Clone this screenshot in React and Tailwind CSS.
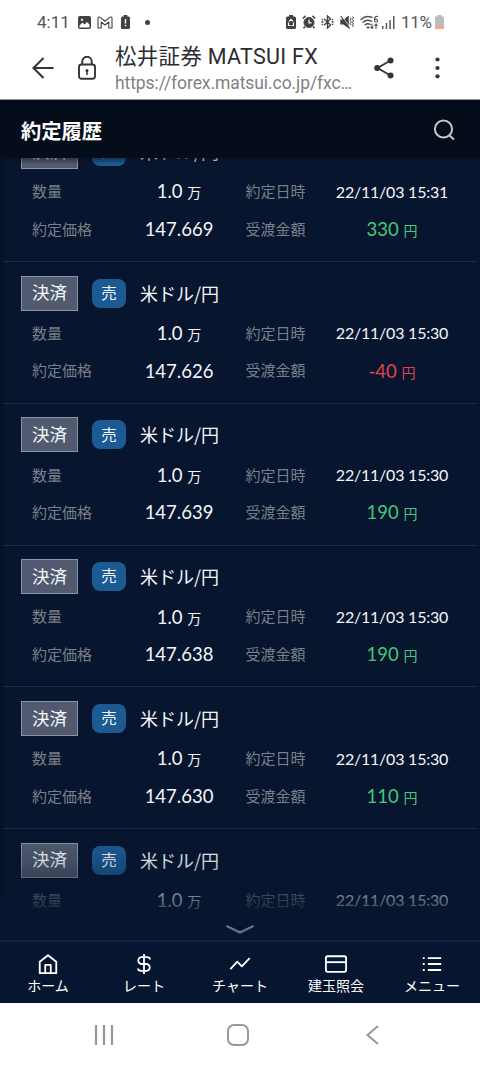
const trades = [
  { price: "147.669", time: "22/11/03 15:31", amount: "330", gain: true },
  { price: "147.626", time: "22/11/03 15:30", amount: "-40", gain: false },
  { price: "147.639", time: "22/11/03 15:30", amount: "190", gain: true },
  { price: "147.638", time: "22/11/03 15:30", amount: "190", gain: true },
  { price: "147.630", time: "22/11/03 15:30", amount: "110", gain: true },
  { price: "", time: "22/11/03 15:30", amount: "", gain: true },
];

function StatusBar() {
  return (
    <div className="flex h-[36px] items-end justify-between pr-[36px] pb-[4px] pl-[37px] font-['Roboto',sans-serif] text-[17px] leading-[20px] text-[#55565a]">
      <div className="flex items-center">
        <span className="w-[34px] whitespace-nowrap">4:11</span>
        <svg className="ml-[7px] h-[13px] w-[13px]" viewBox="0 0 13 13">
          <rect width="13" height="13" rx="2" fill="#404145" />
          <path d="M1.5 9.5 4.5 6.5 6.5 8.5 9 6 11.5 8.5V11.5H1.5Z" fill="#fff" />
          <circle cx="4" cy="3.8" r="1.1" fill="#fff" />
        </svg>
        <svg className="ml-[6px] h-[13px] w-[16px]" viewBox="0 0 16 13" fill="none" stroke="#404145" strokeWidth="1.1" strokeLinejoin="round">
          <path d="M1 12V2.2C1 .9 2.4.6 3.3 1.4L8 5.2 12.7 1.4C13.6.6 15 .9 15 2.2V12H11.8V6L8 9 4.2 6V12Z" />
        </svg>
        <svg className="ml-[8px] h-[14px] w-[9px]" viewBox="0 0 10 14" preserveAspectRatio="none">
          <path d="M3 0h4v1.500h1.500A1.500 1.500 0 0 1 10 3v9.500A1.500 1.500 0 0 1 8.500 14h-7A1.500 1.500 0 0 1 0 12.500V3a1.500 1.500 0 0 1 1.500-1.500H3Z" fill="#404145" />
          <path d="M4.200 4h1.600v4.500H4.200ZM4.200 9.700h1.600v1.600H4.200Z" fill="#fff" />
        </svg>
        <span className="ml-[15px] h-[5px] w-[5px] rounded-full bg-[#404145]" />
      </div>
      <div className="flex items-center">
        <svg className="h-[14px] w-[10px]" viewBox="0 0 10 14">
          <path d="M3 0h4v1.500h1.500A1.500 1.500 0 0 1 10 3v9.500A1.500 1.500 0 0 1 8.500 14h-7A1.500 1.500 0 0 1 0 12.500V3a1.500 1.500 0 0 1 1.500-1.500H3Z" fill="#404145" />
          <path d="M3 6.500 5 4.300l2 2.200M2.500 7.500v3h2M7.500 7.500v3h-2" fill="none" stroke="#fff" strokeWidth="1.100" />
        </svg>
        <svg className="ml-[6px] h-[14px] w-[14px]" viewBox="0 0 14 14" fill="none" stroke="#404145">
          <circle cx="7" cy="7.500" r="5" fill="#404145" />
          <path d="M.8 3.500 3.500.9M13.200 3.500 10.500.9M3 11.500 1.500 13.300M11 11.500l1.500 1.800" strokeWidth="1.500" />
          <path d="M7 4.500v3.300h2.600" stroke="#fff" strokeWidth="1.200" />
        </svg>
        <svg className="ml-[5px] h-[14px] w-[13px]" viewBox="0 0 13 14" fill="none" stroke="#404145" strokeWidth="1.400">
          <path d="M3 3.800 9.500 10 6.500 13V1l3 3L3 10.200" />
          <path d="M.5 7h2M10.500 7h2M.8 4.200l1 .7M12.200 4.200l-1 .7M.8 9.800l1-.7M12.200 9.800l-1-.7" />
        </svg>
        <svg className="ml-[6px] h-[14px] w-[14px]" viewBox="0 0 14 14" fill="none" stroke="#404145">
          <path d="M.3 4.500H3.500L8.800.5V13.500L3.500 9.500H.3Z" fill="#404145" stroke="none" />
          <path d="M2 1 10.500 13.200" stroke="#fff" strokeWidth=".8" />
          <path d="M.8 1 9.600 13.500" strokeWidth="1.200" />
          <path d="m10.200 2.500 1 1.500-1 1.500 1 1.500-1 1.500 1 1.500M12.500 1.500l1 1.500-1 1.500 1 1.500-1 1.500 1 1.500-1 1.500 1 1.500" strokeWidth="1" />
        </svg>
        <svg className="ml-[6px] h-[15px] w-[19px]" viewBox="0 0 19 15" fill="none" stroke="#505155" strokeWidth="1.400" strokeLinecap="round">
          <path d="M1 4.600C4 1.500 8.500 1 12 2.500M3 7.300c2.300-2.200 5.600-2.500 8.500-1M5.200 9.800c1.500-1.300 3.400-1.400 5-.4" />
          <path d="M7.500 12.500h1" strokeWidth="2" />
          <path d="M17.500 1.500C15.500 1 14.500 2.500 14.500 4.500M14.500 5.500a1.500 1.500 0 1 0 3 0 1.500 1.500 0 1 0-3 0" strokeWidth="1.200" />
          <path d="M12 9v4.500m-1.300-1.300L12 13.500l1.200-1.300M16 13.500V9m-1.300 1.300L16 9l1.200 1.300" strokeWidth="1.100" />
        </svg>
        <svg className="ml-[3px] h-[13px] w-[13px]" viewBox="0 0 13 13" fill="#55565a">
          <path d="M0 10h1.500v3H0ZM3.700 7h1.500v6H3.700ZM7.300 4h1.500v9H7.300ZM11 0h1.500v13H11Z" />
        </svg>
        <span className="ml-[6px] w-[33px] whitespace-nowrap tracking-[-0.300px]">11%</span>
        <svg className="ml-[1px] h-[14px] w-[9px]" viewBox="0 0 9 14">
          <path d="M2.500 0h4v1.500H8a1 1 0 0 1 1 1V13a1 1 0 0 1-1 1H1a1 1 0 0 1-1-1V2.500a1 1 0 0 1 1-1h1.500Z" fill="#bcbcbc" />
          <path d="M0 11h9v2a1 1 0 0 1-1 1H1a1 1 0 0 1-1-1Z" fill="#f2a98c" />
        </svg>
      </div>
    </div>
  );
}

function BrowserBar() {
  return (
    <div className="flex h-[64px] items-center border-b border-[#96979c] font-['Roboto','Noto_Sans_CJK_JP',sans-serif]">
      <svg className="ml-[32px] h-[22px] w-[22px]" viewBox="0 0 22 22" fill="none" stroke="#333438" strokeWidth="2.100">
        <path d="M21.500 11H1.500M11.500 1 1.500 11l10 10" />
      </svg>
      <svg className="ml-[24px] h-[24px] w-[18px]" viewBox="0 0 18 24" fill="none" stroke="#333438" strokeWidth="1.900">
        <rect x="1" y="8.500" width="16" height="14.300" rx="2.500" />
        <path d="M4.300 8.500V5.500a4.700 4.700 0 0 1 9.400 0v3" />
        <circle cx="9" cy="14.600" r="1.500" fill="#333438" stroke="none" />
        <path d="M9 15v4" strokeWidth="1.500" />
      </svg>
      <div className="ml-[19px] w-[240px] pt-[4px] whitespace-nowrap">
        <div className="text-[21.500px] leading-[27px] tracking-[0.300px] text-[#2c2d31]">松井証券 MATSUI FX</div>
        <div className="text-[17.500px] leading-[26px] tracking-[-0.080px] text-[#808185]">https://forex.matsui.co.jp/fxc…</div>
      </div>
      <svg className="ml-[19px] h-[22px] w-[20px]" viewBox="0 0 20 22">
        <path d="M16.500 3.500 3.500 11l13 7.500" fill="none" stroke="#333438" strokeWidth="1.800" />
        <g fill="#333438"><circle cx="16.500" cy="3.500" r="3" /><circle cx="3.200" cy="11" r="3" /><circle cx="16.500" cy="18.500" r="3" /></g>
      </svg>
      <svg className="ml-[41px] h-[22px] w-[5px]" viewBox="0 0 5 22" fill="#333438">
        <circle cx="2.500" cy="2.500" r="2.100" /><circle cx="2.500" cy="11" r="2.100" /><circle cx="2.500" cy="19.300" r="2.100" />
      </svg>
    </div>
  );
}

function Trade({ price, time, amount, gain }) {
  return (
    <article className="mx-[3px] h-[141.75px] shrink-0 border-b border-[#1c2b4b] pt-[13.500px]">
      <div className="flex h-[35px] items-center pl-[18px] text-[#f4f6fa]">
        <span className="flex h-[35px] w-[57px] items-center justify-center border border-[#8b93a4] bg-[#515a6e] text-[17.500px] leading-none">決済</span>
        <span className="ml-[14px] flex h-[29px] w-[34px] items-center justify-center rounded-[8px] bg-[#1b5a92] pt-px text-[15.500px] leading-none">売</span>
        <span className="ml-[14px] pb-px font-['Noto_Sans_CJK_JP',sans-serif] text-[18px] leading-none">米ドル/円</span>
      </div>
      <div className="mt-[4px] grid auto-rows-[37.500px] grid-cols-[86px_120px_86px_139px] items-center pl-[29px] leading-none whitespace-nowrap text-[#f4f6fa]">
        <span className="text-[15px] text-[#7a7f8a]">数量</span>
        <span className="pl-[2px] text-center text-[18.500px]">1.0 <span className="text-[14px]">万</span></span>
        <span className="pl-[7.500px] text-[15px] text-[#7a7f8a]">約定日時</span>
        <span className="pr-[3px] text-center text-[16px] tracking-[-0.220px]">{time}</span>
        {price && (
          <>
            <span className="text-[15px] text-[#7a7f8a]">約定価格</span>
            <span className="pl-[2px] text-center text-[18.500px]">{price}</span>
            <span className="pl-[7.500px] text-[15px] text-[#7a7f8a]">受渡金額</span>
            <span className={gain ? "pr-[3px] text-center text-[18.500px] text-[#45c878]" : "pr-[3px] text-center text-[18.500px] text-[#e0434f]"}>
              {amount} <span className="text-[14px]">円</span>
            </span>
          </>
        )}
      </div>
    </article>
  );
}

const tabs = [
  { label: "ホーム", icon: <path d="M3 22V9.500L12 2.500l9 7V22ZM9 22v-9h6v9" /> },
  { label: "レート", icon: <path d="M12 1v22M18.500 7c0-1.700-1.500-2.500-3.500-2.500H9.500a3.750 3.750 0 0 0 0 7.500h5a3.750 3.750 0 0 1 0 7.500H9C7 19.500 5.500 18.700 5.500 17" /> },
  { label: "チャート", icon: <path d="m1.500 17.500 7.500-8 5 5 8.500-9" /> },
  { label: "建玉照会", icon: <><rect x="1" y="3.500" width="22" height="17" rx="2" /><path d="M1 10h22" /></> },
  { label: "メニュー", icon: <path d="M7.500 5.500H22M7.500 12H22M7.500 18.500H22M2 5.500h2M2 12h2M2 18.500h2" /> },
];

function TabBar() {
  return (
    <nav className="grid h-[63px] grid-cols-5 border-t-2 border-[#12223d] bg-[#071630] text-white">
      {tabs.map((tab) => (
        <div key={tab.label} className="flex flex-col items-center pt-[11px]">
          <svg className="h-[22px] w-[22px]" viewBox="0 0 24 24" fill="none" stroke="currentColor" strokeWidth="2" strokeLinejoin="round">{tab.icon}</svg>
          <span className="mt-[2px] text-[14px] leading-[17px] whitespace-nowrap">{tab.label}</span>
        </div>
      ))}
    </nav>
  );
}

export default function App() {
  return (
    <div className="flex h-[1067px] w-[480px] flex-col overflow-hidden bg-white font-['Lato','Noto_Sans_CJK_JP',sans-serif]">
      <StatusBar />
      <BrowserBar />
      <header className="flex h-[58px] items-center justify-between bg-[#050d1b] pt-[3px] pr-[25px] pl-[21px]">
        <h1 className="pt-px text-[20.300px] leading-none font-bold text-white">約定履歴</h1>
        <svg className="mb-[2px] h-[22px] w-[22px]" viewBox="0 0 22 22" fill="none" stroke="#c3c6cd" strokeWidth="2">
          <circle cx="10.500" cy="10" r="8.600" /><path d="m16 16 5 4.500" />
        </svg>
      </header>
      <main className="relative flex h-[782px] flex-col overflow-hidden bg-[linear-gradient(to_right,#050f24_0px,#08152e_8px)]">
        <div className="-mt-[37.750px] flex flex-col">
          {trades.map((trade, i) => <Trade key={i} {...trade} />)}
        </div>
        <div className="absolute inset-x-0 top-0 h-[6px] bg-gradient-to-b from-[#050d1b]/50 to-transparent" />
        <div className="absolute inset-x-0 bottom-0 flex h-[112px] items-end justify-center bg-[linear-gradient(to_bottom,transparent_10px,rgba(8,21,46,0.15)_32px,rgba(8,21,46,0.58)_72px,#08152e_92px)] pb-[6px]">
          <svg className="h-[9px] w-[30px]" viewBox="0 0 30 9" fill="none" stroke="#68728a" strokeWidth="2.200">
            <path d="M1.500 1 15 7.500 28.500 1" />
          </svg>
        </div>
      </main>
      <TabBar />
      <footer className="flex h-[64px] items-center pl-[94px]">
        <svg className="h-[20px] w-[20px]" viewBox="0 0 20 20" stroke="#97979a" strokeWidth="2.200">
          <path d="M2 0v20M10 0v20M18 0v20" />
        </svg>
        <svg className="ml-[113px] h-[22px] w-[22px]" viewBox="0 0 22 22" fill="none" stroke="#97979a" strokeWidth="2">
          <rect x="1" y="1" width="20" height="20" rx="6" />
        </svg>
        <svg className="ml-[117px] h-[20px] w-[13px]" viewBox="0 0 13 20" fill="none" stroke="#97979a" strokeWidth="2">
          <path d="m12 1-10.500 9L12 19" />
        </svg>
      </footer>
    </div>
  );
}
